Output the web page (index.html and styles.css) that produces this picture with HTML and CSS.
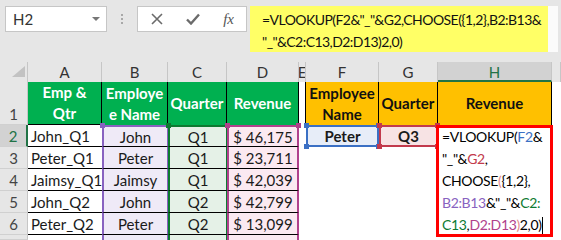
FILE: index.html
```html
<!DOCTYPE html>
<html lang="en">
<head>
    <meta charset="UTF-8">
    <title>VLOOKUP with CHOOSE</title>
    <link rel="stylesheet" href="styles.css">
</head>
<body>
    <div class="topbar">
        <div class="namebox"><span>H2</span><span class="caret"></span></div>
        <div class="grip"><i></i><i></i><i></i></div>
        <div class="fxbtns">
            <svg width="12" height="12" viewBox="0 0 12 12"><path d="M1 1L11 11M11 1L1 11" stroke="#6b6b6b" stroke-width="1.6" fill="none"/></svg>
            <svg width="14" height="12" viewBox="0 0 14 12"><path d="M1 6.5L5 10.5L13 1.5" stroke="#6b6b6b" stroke-width="2.4" fill="none"/></svg>
            <span class="fx">fx</span>
        </div>
        <div class="formula">=VLOOKUP(F2&amp;"_"&amp;G2,CHOOSE({1,2},B2:B13&amp;<br>"_"&amp;C2:C13,D2:D13)2,0)</div>
        <div class="fxend"></div>
    </div>

    <div class="sheet">
        <!-- column headers -->
        <div class="corner"></div>
        <div class="ch">A</div>
        <div class="ch">B</div>
        <div class="ch">C</div>
        <div class="ch">D</div>
        <div class="ch">E</div>
        <div class="ch">F</div>
        <div class="ch">G</div>
        <div class="ch sel">H</div>
        <div class="ch"></div>

        <!-- row 1 -->
        <div class="rh low">1</div>
        <div class="head green underline">Emp &amp;<br>Qtr</div>
        <div class="head green">Employe<br>e Name</div>
        <div class="head green">Quarter</div>
        <div class="head green">Revenue</div>
        <div class="spacer edge"></div>
        <div class="head orange">Employee<br>Name</div>
        <div class="head orange">Quarter</div>
        <div class="head orange">Revenue</div>
        <div class="spacer"></div>

        <!-- row 2 -->
        <div class="rh sel">2</div>
        <div class="cell left">John_Q1</div>
        <div class="cell rng-b first"><i class="knob tl"></i><i class="knob tr"></i>John</div>
        <div class="cell rng-c first"><i class="knob tl"></i>Q1</div>
        <div class="cell rng-d first"><i class="knob tl"></i><i class="knob tr"></i>$ 46,175</div>
        <div class="spacer"></div>
        <div class="cell pick blue"><i class="knob tl"></i><i class="knob tr"></i><i class="knob bl"></i><i class="knob br"></i>Peter</div>
        <div class="cell pick red"><i class="knob tl"></i><i class="knob tr"></i><i class="knob bl"></i><i class="knob br"></i>Q3</div>
        <div class="cell active">
            <div class="editor">
                <div class="etext">=VLOOKUP(<span class="t-f">F2</span>&amp;<br>"_"&amp;<span class="t-g">G2</span>,<br>CHOOSE<span class="t-p">(</span>{1,2},<br><span class="t-b">B2:B13</span>&amp;"_"&amp;<span class="t-c">C2:</span><br><span class="t-c">C13</span>,<span class="t-d">D2:D13</span><span class="t-p">)</span>2,0)<span class="caret-line"></span></div>
            </div>
        </div>
        <div class="spacer"></div>

        <!-- row 3 -->
        <div class="rh">3</div>
        <div class="cell left">Peter_Q1</div>
        <div class="cell rng-b">Peter</div>
        <div class="cell rng-c">Q1</div>
        <div class="cell rng-d">$ 23,711</div>
        <div class="spacer"></div>
        <div class="spacer"></div>
        <div class="spacer"></div>
        <div class="spacer"></div>
        <div class="spacer"></div>

        <!-- row 4 -->
        <div class="rh">4</div>
        <div class="cell left">Jaimsy_Q1</div>
        <div class="cell rng-b">Jaimsy</div>
        <div class="cell rng-c">Q1</div>
        <div class="cell rng-d">$ 42,039</div>
        <div class="spacer"></div>
        <div class="spacer"></div>
        <div class="spacer"></div>
        <div class="spacer"></div>
        <div class="spacer"></div>

        <!-- row 5 -->
        <div class="rh">5</div>
        <div class="cell left">John_Q2</div>
        <div class="cell rng-b">John</div>
        <div class="cell rng-c">Q2</div>
        <div class="cell rng-d">$ 42,799</div>
        <div class="spacer"></div>
        <div class="spacer"></div>
        <div class="spacer"></div>
        <div class="spacer"></div>
        <div class="spacer"></div>

        <!-- row 6 -->
        <div class="rh">6</div>
        <div class="cell left">Peter_Q2</div>
        <div class="cell rng-b">Peter</div>
        <div class="cell rng-c">Q2</div>
        <div class="cell rng-d">$ 13,099</div>
        <div class="spacer"></div>
        <div class="spacer"></div>
        <div class="spacer"></div>
        <div class="spacer"></div>
        <div class="spacer"></div>

        <!-- row 7, only its top edge shows -->
        <div class="rh"></div>
        <div class="cell left open"></div>
        <div class="cell rng-b open"></div>
        <div class="cell rng-c open"></div>
        <div class="cell rng-d open"></div>
        <div class="spacer"></div>
        <div class="spacer"></div>
        <div class="spacer"></div>
        <div class="spacer"></div>
        <div class="spacer"></div>
    </div>
</body>
</html>
```

FILE: styles.css
```css
* {
    box-sizing: border-box;
}

body {
    margin: 0;
    width: 561px;
    height: 240px;
    overflow: hidden;
    background-color: #e6e6e6;
    font-family: Lato, "Liberation Sans", sans-serif;
    color: #1a1a1a;
}

/* formula bar */
.topbar {
    display: flex;
    align-items: flex-start;
    height: 62px;
    padding-top: 6px;
}

.namebox {
    margin-left: 5px;
    width: 102px;
    height: 26px;
    background: #fff;
    border: 1px solid #c6c6c6;
    display: flex;
    align-items: center;
    justify-content: space-between;
    padding: 0 6px 0 7px;
    font-size: 15px;
    color: #333;
}

.caret {
    border-left: 4px solid transparent;
    border-right: 4px solid transparent;
    border-top: 4px solid #777;
}

.grip {
    width: 30px;
    height: 26px;
    display: flex;
    flex-direction: column;
    align-items: center;
    justify-content: center;
    gap: 2px;
}

.grip i {
    width: 2px;
    height: 2px;
    background: #a8a8a8;
}

.fxbtns {
    width: 110px;
    height: 26px;
    background: #fff;
    border: 1px solid #c6c6c6;
    display: flex;
    align-items: center;
    justify-content: space-between;
    padding: 0 12px 0 13px;
}

.fx {
    font-family: "Liberation Serif", serif;
    font-style: italic;
    font-size: 15px;
    color: #555;
}

.formula {
    margin-left: 3px;
    width: 298px;
    height: 46px;
    background: #ffff66;
    padding: 3px 0 0 12px;
    font-size: 14px;
    letter-spacing: -0.55px;
    line-height: 22px;
    white-space: nowrap;
    color: #111;
}

.fxend {
    width: 10px;
    height: 46px;
    background: #fbfbfb;
}

/* grid */
.sheet {
    display: grid;
    grid-template-columns: 28px 74px 66px 59px 72px 7px 73px 59px 114px 9px;
    grid-template-rows: 20px 43px repeat(5, 22px) 5px;
    background: #fff;
    font-size: 15px;
}

.corner {
    position: relative;
    background: #e6e6e6;
    border-right: 1px solid #c6c6c6;
}

.corner::after {
    content: "";
    position: absolute;
    right: 2px;
    bottom: 5px;
    border-left: 13px solid transparent;
    border-bottom: 11px solid #c2c2c2;
}

.ch {
    background: #e6e6e6;
    border-right: 1px solid #c6c6c6;
    color: #333;
    display: flex;
    align-items: center;
    justify-content: center;
    overflow: hidden;
}

.ch.sel {
    background: #d2d2d2;
    color: #217346;
    border-bottom: 2px solid #217346;
    padding-top: 2px;
}

.rh {
    background: #e6e6e6;
    border-right: 1px solid #c6c6c6;
    border-bottom: 1px solid #d0d0d0;
    color: #444;
    display: flex;
    align-items: center;
    justify-content: center;
}

.rh.low {
    align-items: flex-end;
    padding-bottom: 1px;
}

.rh.sel {
    background: #d2d2d2;
    color: #217346;
    border-right: 2px solid #217346;
}

.head {
    font-weight: 700;
    text-align: center;
    line-height: 21px;
    display: flex;
    align-items: center;
    justify-content: center;
    border-right: 1px solid #000;
    white-space: nowrap;
}

.head.underline {
    border-bottom: 1px solid #000;
}

.green {
    background: #00b050;
    color: #fff;
}

.orange {
    background: #ffc000;
    color: #111;
}

.spacer {
    background: #fff;
}

.spacer.edge {
    border-right: 1px solid #000;
}

.cell {
    position: relative;
    display: flex;
    align-items: center;
    justify-content: center;
    white-space: nowrap;
    border-bottom: 1px solid #000;
}

.cell.left {
    justify-content: flex-start;
    padding-left: 3px;
    overflow: hidden;
}

.cell.open {
    border-bottom: none;
}

/* reference ranges */
.rng-b {
    --rc: #8862c0;
    background: #efeaf7;
    border-left: 2px solid var(--rc);
    border-right: 1px solid var(--rc);
}

.rng-c {
    --rc: #0d7a31;
    background: #e5f1e7;
    border-left: 2px solid var(--rc);
    border-right: 1px solid var(--rc);
}

.rng-d {
    --rc: #b0418c;
    background: #fbe9f1;
    border-left: 2px solid var(--rc);
    border-right: 2px solid var(--rc);
}

.first {
    border-top: 2px solid var(--rc);
}

.pick {
    font-weight: 700;
    border: 2px solid var(--rc);
}

.pick.blue {
    --rc: #3b70c4;
    background: #e7edf8;
}

.pick.red {
    --rc: #c23a4c;
    background: #f7e3e4;
}

.knob {
    position: absolute;
    z-index: 2;
    width: 5px;
    height: 5px;
    background: var(--rc);
}

.knob.tl { top: -4px; left: -4px; }
.knob.tr { top: -4px; right: -4px; }
.knob.bl { bottom: -4px; left: -4px; }
.knob.br { bottom: -4px; right: -4px; }

/* cell being edited */
.cell.active {
    border: none;
}

.editor {
    position: absolute;
    z-index: 3;
    top: 0;
    left: -2px;
    width: 117px;
    height: 112px;
    background: #fff;
    border: 3px solid #ff0000;
    padding-left: 3px;
    font-size: 14px;
    letter-spacing: -0.35px;
    line-height: 22px;
    white-space: nowrap;
    color: #000;
}

.etext {
    margin-top: -2px;
}

.t-f { color: #3b70c4; }
.t-g { color: #c23a4c; }
.t-b { color: #8862c0; }
.t-c { color: #0d7a31; }
.t-d { color: #b0418c; }
.t-p { color: #e48a8a; }

.caret-line {
    display: inline-block;
    width: 1px;
    height: 17px;
    background: #000;
    vertical-align: -4px;
}
```
